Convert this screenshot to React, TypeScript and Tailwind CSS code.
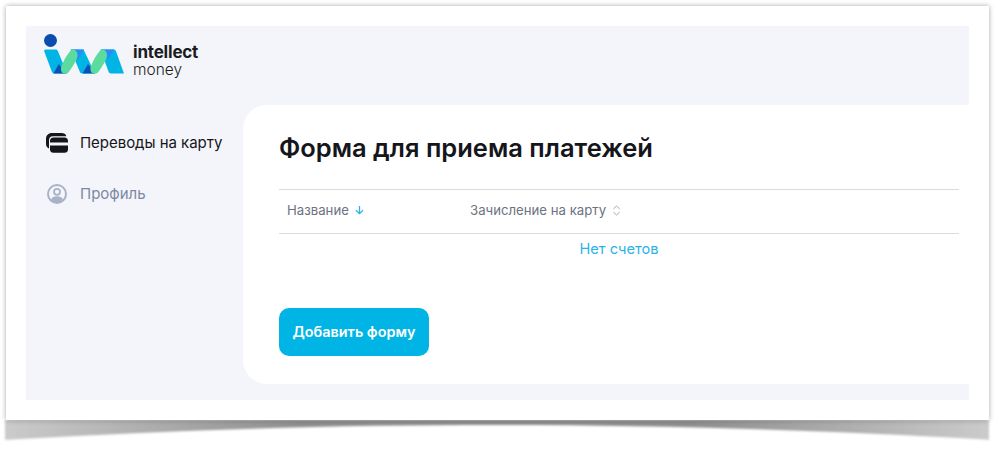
import React from "react";

function Logo() {
  return (
    <svg width="80" height="42" viewBox="0 0 80 42" className="block shrink-0">
      <circle cx="6.500" cy="6.500" r="6.500" fill="#0a4cb0" />
      <path d="M1.500 15.500H11.500c1.200 0 2 .6 2.500 1.800L23 39.500H10.500c-1.300 0-2.200-.6-2.600-1.800L.3 17.500C0 16.300.4 15.500 1.500 15.500z" fill="#00b4e6" />
      <path d="M26.500 15.500h13L51 39.500H38c-1 0-1.800-.6-2.200-1.700z" fill="#00b4e6" />
      <path d="M56.500 15.500h12.500c1.600 0 2.500.6 3 1.800L80 39.500H67c-1.200 0-2-.6-2.400-1.700z" fill="#00b4e6" />
      <path d="M9.500 39.500l5.300-9.500 7 9.500z" fill="#0f4fb5" />
      <path d="M38.500 39.500l5.500-9.500 7 9.500z" fill="#0f4fb5" />
      <path d="M27 15.500h13L34 25.500z" fill="#2b8cf5" />
      <path d="M57 15.500h13.500L63.500 25.500z" fill="#2b8cf5" />
      <path d="M18 38.500C16.500 36 16.500 34 18 31C20.500 25 24 19 27.500 15.800C29.500 15 32 16 33 18.500C34 21 33.500 24 31.500 27.500C29 32 26.500 36 24 39C22 39.800 19 39.800 18 38.500Z" fill="#5cdb9e" />
      <path d="M47.500 38.500C46 36 46 34 47.500 31C50 25 53.500 19 57 15.800C59 15 61.500 16 62.500 18.500C63.500 21 63 24 61 27.500C58.500 32 56 36 53.500 39C51.500 39.800 48.500 39.800 47.500 38.500Z" fill="#5cdb9e" />
    </svg>
  );
}

function CardIcon() {
  return (
    <svg width="22" height="20" viewBox="0 0 22 20" className="block shrink-0">
      <path d="M0 9.500V6C0 2.500 2.300 0 6 0h9.500C18 0 19.800 1.200 20.300 3.200H7C4 3.200 3 5 3 7.500V15.500C1.200 14.500 0 13 0 11z" fill="#15161b" />
      <path d="M4 8c0-2 1.300-3.500 3.500-3.500h11C20.600 4.500 22 6 22 8v1.500H4z" fill="#15161b" />
      <path d="M4 12.500h18V16.500c0 2-1.400 3.300-3.500 3.300h-11C5.300 19.800 4 18.500 4 16.500z" fill="#15161b" />
    </svg>
  );
}

function ProfileIcon() {
  return (
    <svg width="20" height="20" viewBox="0 0 20 20" className="block shrink-0">
      <circle cx="10" cy="10" r="9" fill="none" stroke="#a8b3c7" strokeWidth="2" />
      <circle cx="10" cy="7.800" r="3" fill="none" stroke="#a8b3c7" strokeWidth="1.800" />
      <path d="M3.800 16c1-2.800 3.400-3.800 6.200-3.800s5.200 1 6.200 3.800c-1.600 1.700-3.800 2.800-6.200 2.800S5.400 17.700 3.800 16z" fill="#a8b3c7" />
    </svg>
  );
}

function ArrowDown() {
  return (
    <svg width="9" height="10" viewBox="0 0 9 10" className="block shrink-0">
      <path d="M4.500 1v7.500M1 5.200l3.500 3.500L8 5.200" fill="none" stroke="#2bb3e8" strokeWidth="1.300" />
    </svg>
  );
}

function Sort() {
  return (
    <svg width="9" height="11" viewBox="0 0 9 11" className="block shrink-0">
      <path d="M1.300 4L4.500 1l3.200 3M1.300 7l3.200 3 3.200-3" fill="none" stroke="#a3a9b3" strokeWidth="1" />
    </svg>
  );
}

function Shadow() {
  return (
    <svg width="1003" height="29" viewBox="0 0 1003 29" className="absolute left-0 top-[420px]">
      <defs>
        <linearGradient id="sg" x1="0" x2="1" y1="0" y2="0">
          <stop offset="0" stopColor="#cbcbcb" />
          <stop offset="0.3" stopColor="#8f8f8f" />
          <stop offset="0.7" stopColor="#8f8f8f" />
          <stop offset="1" stopColor="#cbcbcb" />
        </linearGradient>
        <filter id="sb" x="-2%" y="-30%" width="104%" height="160%">
          <feGaussianBlur stdDeviation="0.800" />
        </filter>
      </defs>
      <path d="M5 0H989V18C990 20 988 20 985 19.500C800 9 650 5 497 5C340 5 190 9 12 19.500C6 20 4 20 5 18Z" fill="url(#sg)" filter="url(#sb)" />
    </svg>
  );
}

export default function App() {
  return (
    <div
      className="relative h-[449px] w-[1003px] overflow-hidden bg-white pl-[6px] pt-[6px]"
      style={{ fontFamily: "Inter, 'Noto Sans', sans-serif" }}
    >
      <Shadow />
      <div className="relative h-[414px] w-[983px] bg-white p-5 shadow-[0_0_5px_rgba(0,0,0,0.35)]">
        <div className="flex h-[374px] w-[943px] flex-col overflow-hidden bg-[#f4f5fa]">
          <header className="flex h-[79px] shrink-0 items-start pl-[18px] pt-2">
            <Logo />
            <div className="ml-[9px] mt-[10px] text-[#1a1c22]">
              <div className="text-[17px] font-bold leading-[17px] tracking-[-0.2px]">intellect</div>
              <div className="text-[15.500px] font-light leading-[17px]">money</div>
            </div>
          </header>
          <div className="flex h-[279px] shrink-0">
            <nav className="flex w-[217px] shrink-0 flex-col gap-[31px] pl-5 pt-[28px] text-[15px] leading-[20px]">
              <a className="flex items-center gap-3 text-[#15161b]">
                <CardIcon />
                <span className="tracking-[-0.03px]">Переводы на карту</span>
              </a>
              <a className="flex items-center gap-[13px] pl-px text-[#7d88a3]">
                <ProfileIcon />
                <span>Профиль</span>
              </a>
            </nav>
            <main className="h-[279px] w-[726px] rounded-l-[24px] bg-white pl-9 pr-[10px] pt-[26px]">
              <h1 className="text-[25.500px] font-semibold leading-[34px] text-[#15161b]">
                Форма для приема платежей
              </h1>
              <div className="mt-6 flex h-[45px] items-center border-y border-[#d6dbe4] pb-[2px] text-[13.200px] text-[#6d7280]">
                <div className="flex w-[183px] items-center gap-[6px] pl-2">
                  <span>Название</span>
                  <ArrowDown />
                </div>
                <div className="flex items-center gap-[6px] pl-2">
                  <span>Зачисление на карту</span>
                  <Sort />
                </div>
              </div>
              <div className="mt-[5px] text-center text-[14.600px] leading-[20px] text-[#2bb3e8]">Нет счетов</div>
              <button className="mt-[49px] h-12 w-[150px] rounded-[10px] bg-[#00b5e6] text-[14.400px] font-semibold text-white">
                Добавить форму
              </button>
            </main>
          </div>
        </div>
      </div>
    </div>
  );
}
